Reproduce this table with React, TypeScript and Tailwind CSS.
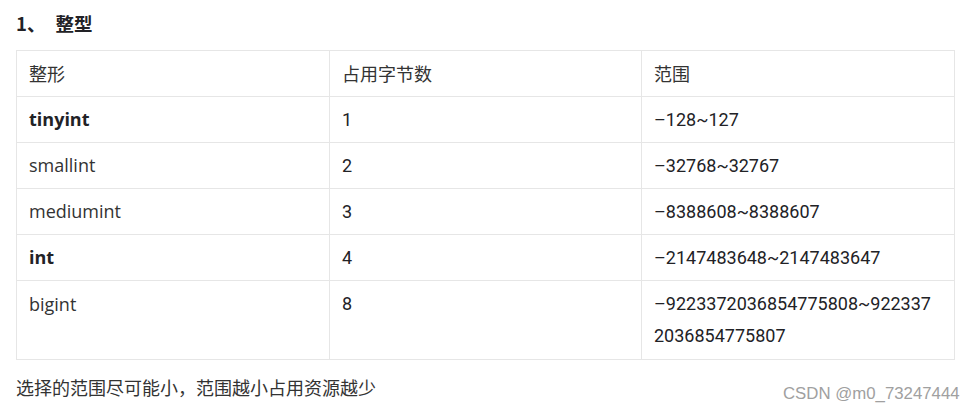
import React from "react";

const rows: { name: string; bold?: boolean; bytes: string; range: React.ReactNode; tall?: boolean }[] = [
  { name: "tinyint", bold: true, bytes: "1", range: "–128~127" },
  { name: "smallint", bytes: "2", range: "–32768~32767" },
  { name: "mediumint", bytes: "3", range: "–8388608~8388607" },
  { name: "int", bold: true, bytes: "4", range: "–2147483648~2147483647" },
  {
    name: "bigint",
    bytes: "8",
    tall: true,
    range: (
      <>
        –9223372036854775808~922337
        <br />
        2036854775807
      </>
    ),
  },
];

const cjk = "font-['Noto_Sans_CJK_SC',sans-serif]";
const num = "font-['Roboto','Noto_Sans_CJK_SC',sans-serif]";
const lat = "font-['Open_Sans','Noto_Sans_CJK_SC',sans-serif]";

export default function App() {
  return (
    <div className="relative w-[974px] h-[412px] bg-white text-[#222226] overflow-hidden">
      <div className="pl-4 pt-[9px]">
        <h4 className={`${cjk} font-bold text-[18.5px] leading-[28px] text-[#222226] flex`}>
          <span>1、</span>
          <span className="ml-[10px]">整型</span>
        </h4>
        <table className="mt-[13px] w-[938px] border-collapse table-fixed">
          <colgroup>
            <col className="w-[313px]" />
            <col className="w-[312px]" />
            <col className="w-[313px]" />
          </colgroup>
          <thead>
            <tr>
              <th className={`${cjk} border border-[#e6e6e6] text-left font-normal text-[18px] leading-[31px] px-3 py-[7px] text-[#333]`}>
                整形
              </th>
              <th className={`${cjk} border border-[#e6e6e6] text-left font-normal text-[18px] leading-[31px] px-3 py-[7px] text-[#333]`}>
                占用字节数
              </th>
              <th className={`${cjk} border border-[#e6e6e6] text-left font-normal text-[18px] leading-[31px] px-3 py-[7px] text-[#333]`}>
                范围
              </th>
            </tr>
          </thead>
          <tbody>
            {rows.map((r) => (
              <tr key={r.name}>
                <td
                  className={`${lat} border border-[#e6e6e6] align-top text-[18px] px-3 py-[7px] ${
                    r.tall ? "leading-[32px]" : "leading-[31px]"
                  } ${r.bold ? "font-bold text-[#222226]" : "font-normal text-[#333]"}`}
                >
                  {r.name}
                </td>
                <td
                  className={`${num} border border-[#e6e6e6] align-top text-[18px] px-3 py-[7px] text-[#222226] ${
                    r.tall ? "leading-[32px]" : "leading-[31px]"
                  }`}
                >
                  {r.bytes}
                </td>
                <td
                  className={`${num} border border-[#e6e6e6] align-top text-[18px] px-3 py-[7px] text-[#222226] whitespace-nowrap ${
                    r.tall ? "leading-[32px]" : "leading-[31px]"
                  }`}
                >
                  {r.range}
                </td>
              </tr>
            ))}
          </tbody>
        </table>
        <p className={`${cjk} mt-[12px] text-[18px] leading-[30px] text-[#333]`}>
          选择的范围尽可能小，范围越小占用资源越少
        </p>
      </div>
      <div className="absolute left-[783px] top-[383px] font-['Liberation_Sans',sans-serif] text-[16.8px] leading-[22px] text-[#a0a0a0]">
        CSDN @m0_73247444
      </div>
    </div>
  );
}
